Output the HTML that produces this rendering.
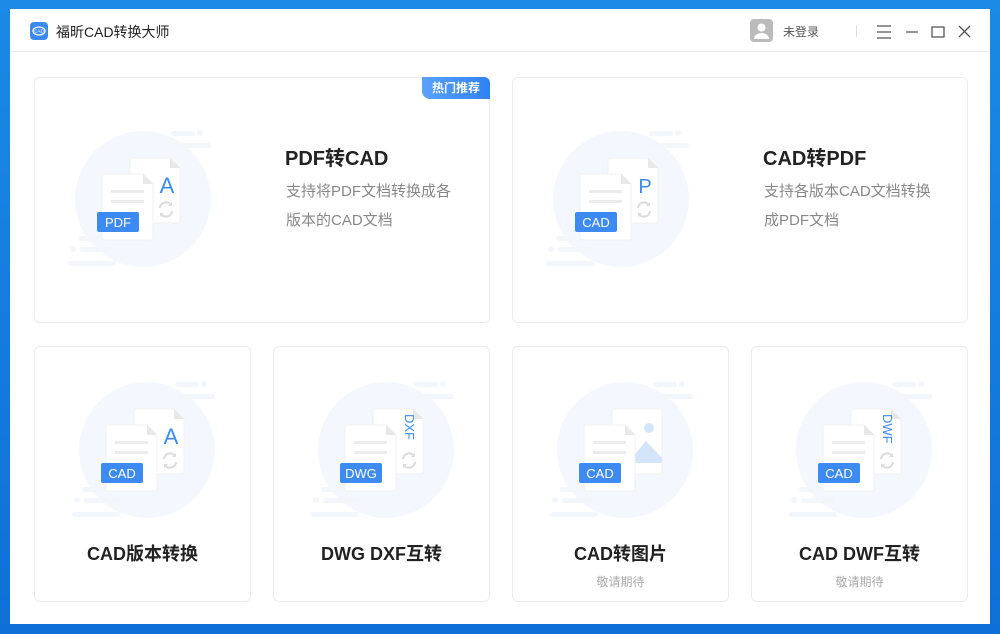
<!DOCTYPE html>
<html><head><meta charset="utf-8"><style>
*{margin:0;padding:0;box-sizing:border-box}
body{width:1000px;height:634px;overflow:hidden;background:linear-gradient(180deg,#1a8ae6,#0f6fd8);font-family:"Liberation Sans","Noto Sans CJK SC",sans-serif;position:relative}
.win{position:absolute;left:10px;top:9px;width:980px;height:615px;background:#fff}
.hdr{position:absolute;left:0;top:0;width:980px;height:43px;border-bottom:1px solid #ececec}
.card{position:absolute;border:1px solid #ececec;border-radius:6px;background:#fff}
.t{position:absolute;font-weight:bold;color:#222;white-space:nowrap}
.d{position:absolute;color:#888;font-size:15px;line-height:29px}
.s{position:absolute;font-size:12px;color:#aaa;text-align:center;width:100%}
svg.il{position:absolute;width:150px;height:150px}
</style></head><body>
<svg width="0" height="0" style="position:absolute"><defs>
<g id="bg">
<circle cx="75" cy="75" r="68" fill="#f4f8fe"/>
<rect x="103" y="7" width="24" height="5" rx="2.5" fill="#f3f6fb"/><circle cx="132" cy="9" r="3" fill="#f3f6fb"/>
<rect x="105" y="19" width="38" height="5" rx="2.5" fill="#f3f6fb"/>
<rect x="10" y="112" width="22" height="5" rx="2.5" fill="#f3f6fb"/><circle cx="5" cy="125" r="3" fill="#f3f6fb"/>
<rect x="12" y="123" width="36" height="5" rx="2.5" fill="#f3f6fb"/><rect x="0" y="137" width="48" height="5" rx="2.5" fill="#f3f6fb"/>
</g>
<g id="back"><path d="M62 36a2 2 0 0 1 2-2h38l10 10v53a2 2 0 0 1-2 2H64a2 2 0 0 1-2-2z" fill="#fff" stroke="#f0f0f0"/><path d="M102 34v10h10z" fill="#e8e8e8"/></g>
<g id="front"><path d="M34 52a2 2 0 0 1 2-2h39l10 10v54a2 2 0 0 1-2 2H36a2 2 0 0 1-2-2z" fill="#fff" stroke="#f0f0f0"/><path d="M75 50v10h10z" fill="#e8e8e8"/>
<rect x="43" y="66" width="33" height="3" fill="#ececec"/><rect x="43" y="76" width="33" height="3" fill="#ececec"/></g>
<g id="ref"><path d="M92 84a6 6 0 0 1 11-3M104 87a6 6 0 0 1-11 3" stroke="#ddd" stroke-width="2.2" fill="none"/><path d="M104 78v4h-4z M92 93v-4h4z" fill="#ddd"/></g>
</defs></svg>
<div class="win">
<div class="hdr">
<svg style="position:absolute;left:20px;top:13px" width="18" height="18"><rect width="18" height="18" rx="4" fill="#3a8af0"/><ellipse cx="9" cy="9" rx="6" ry="4" fill="none" stroke="#fff" stroke-width="1.3"/><text x="9" y="10.5" font-size="4.5" fill="#fff" text-anchor="middle" font-family="Liberation Sans">CAD</text></svg>
<div style="position:absolute;left:46px;top:13px;font-size:14px;color:#222">福昕CAD转换大师</div>
<svg style="position:absolute;left:740px;top:10px" width="23" height="23"><rect width="23" height="23" rx="4" fill="#bbb"/><circle cx="11.5" cy="8.5" r="4" fill="#fff"/><path d="M4 20a7.5 6 0 0 1 15 0z" fill="#fff"/></svg>
<div style="position:absolute;left:773px;top:14px;font-size:12px;color:#555">未登录</div>
<div style="position:absolute;left:846px;top:16px;width:1px;height:12px;background:#ddd"></div>
<svg style="position:absolute;left:866px;top:15px" width="100" height="16" stroke="#555" stroke-width="1.3" fill="none"><path d="M1 2h14M1 8h14M1 14h14M30 8h12M56 3h12v10h-12zM83 2l11 11M94 2l-11 11"/></svg>
</div>
<div class="card" style="left:24px;top:68px;width:456px;height:246px">
<div style="position:absolute;right:-1px;top:-1px;width:68px;height:22px;background:linear-gradient(90deg,#5aa2fb,#2f82f2);border-radius:0 6px 0 8px;color:#fff;font-size:12px;font-weight:bold;text-align:center;line-height:22px">热门推荐</div>
<svg class="il" style="left:33px;top:46px"><use href="#bg"/><use href="#back"/><text x="99" y="69" font-size="22" fill="#3d8bf2" text-anchor="middle">A</text><use href="#ref"/><use href="#front"/><rect x="29" y="88" width="42" height="20" rx="2" fill="#3d8bf2"/><text x="50" y="103" font-size="13" fill="#fff" text-anchor="middle">PDF</text></svg>
<div class="t" style="left:250px;top:64px;font-size:20px">PDF转CAD</div>
<div class="d" style="left:251px;top:99px">支持将PDF文档转换成各<br>版本的CAD文档</div>
</div>
<div class="card" style="left:502px;top:68px;width:456px;height:246px">
<svg class="il" style="left:33px;top:46px"><use href="#bg"/><use href="#back"/><text x="99" y="69" font-size="20" fill="#3d8bf2" text-anchor="middle">P</text><use href="#ref"/><use href="#front"/><rect x="29" y="88" width="42" height="20" rx="2" fill="#3d8bf2"/><text x="50" y="103" font-size="13" fill="#fff" text-anchor="middle">CAD</text></svg>
<div class="t" style="left:250px;top:64px;font-size:20px">CAD转PDF</div>
<div class="d" style="left:251px;top:99px">支持各版本CAD文档转换<br>成PDF文档</div>
</div>
<div class="card" style="left:24px;top:337px;width:217px;height:256px">
<svg class="il" style="left:37px;top:28px"><use href="#bg"/><use href="#back"/><text x="99" y="69" font-size="22" fill="#3d8bf2" text-anchor="middle">A</text><use href="#ref"/><use href="#front"/><rect x="29" y="88" width="42" height="20" rx="2" fill="#3d8bf2"/><text x="50" y="103" font-size="13" fill="#fff" text-anchor="middle">CAD</text></svg>
<div class="t" style="left:0;width:100%;text-align:center;top:193px;font-size:18px">CAD版本转换</div>
</div>
<div class="card" style="left:263px;top:337px;width:217px;height:256px">
<svg class="il" style="left:37px;top:28px"><use href="#bg"/><use href="#back"/><text x="0" y="0" font-size="13" fill="#3d8bf2" transform="translate(94 39) rotate(90)">DXF</text><use href="#ref"/><use href="#front"/><rect x="29" y="88" width="42" height="20" rx="2" fill="#3d8bf2"/><text x="50" y="103" font-size="13" fill="#fff" text-anchor="middle">DWG</text></svg>
<div class="t" style="left:0;width:100%;text-align:center;top:193px;font-size:18px">DWG DXF互转</div>
</div>
<div class="card" style="left:502px;top:337px;width:217px;height:256px">
<svg class="il" style="left:37px;top:28px"><use href="#bg"/><path d="M62 36a2 2 0 0 1 2-2h46a2 2 0 0 1 2 2v61a2 2 0 0 1-2 2H64a2 2 0 0 1-2-2z" fill="#fff" stroke="#f0f0f0"/><circle cx="99" cy="53" r="5" fill="#d4e5fb"/><path d="M84 80l12-14 16 17v5H84z" fill="#d4e5fb"/><use href="#front"/><rect x="29" y="88" width="42" height="20" rx="2" fill="#3d8bf2"/><text x="50" y="103" font-size="13" fill="#fff" text-anchor="middle">CAD</text></svg>
<div class="t" style="left:0;width:100%;text-align:center;top:193px;font-size:18px">CAD转图片</div>
<div class="s" style="top:226px">敬请期待</div>
</div>
<div class="card" style="left:741px;top:337px;width:217px;height:256px">
<svg class="il" style="left:37px;top:28px"><use href="#bg"/><use href="#back"/><text x="0" y="0" font-size="13" fill="#3d8bf2" transform="translate(94 39) rotate(90)">DWF</text><use href="#ref"/><use href="#front"/><rect x="29" y="88" width="42" height="20" rx="2" fill="#3d8bf2"/><text x="50" y="103" font-size="13" fill="#fff" text-anchor="middle">CAD</text></svg>
<div class="t" style="left:0;width:100%;text-align:center;top:193px;font-size:18px">CAD DWF互转</div>
<div class="s" style="top:226px">敬请期待</div>
</div>
</div>
</body></html>
